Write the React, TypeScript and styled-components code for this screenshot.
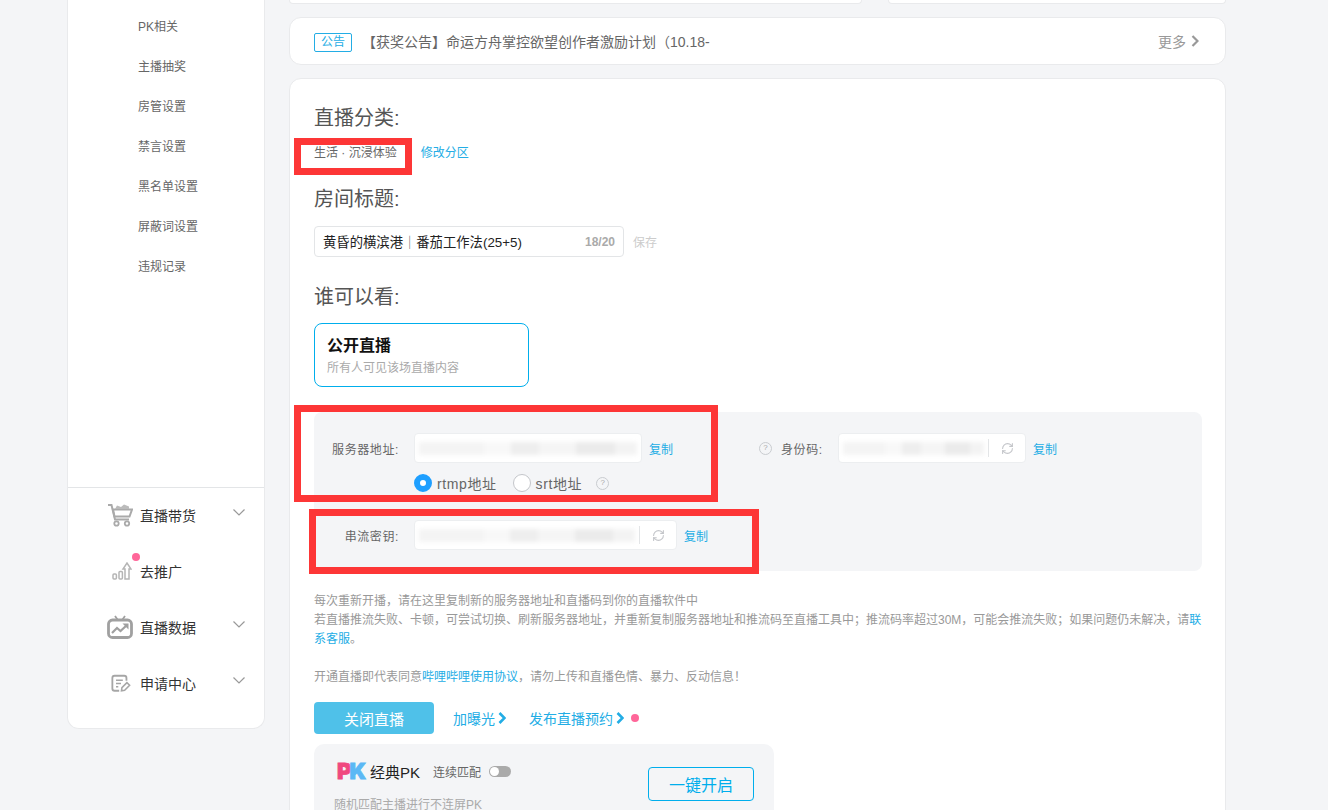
import React from "react";
import styled, { createGlobalStyle } from "styled-components";
import { RefreshCw } from "lucide-react";

const GlobalStyle = createGlobalStyle`
  html, body {
    margin: 0;
    padding: 0;
    height: 810px;
    overflow: hidden;
    background: #f4f5f7;
    font-family: "Liberation Sans", "Noto Sans CJK SC", sans-serif;
  }
  * { box-sizing: border-box; }
`;

const Page = styled.div`
  position: relative;
  display: flex;
  align-items: flex-start;
  gap: 24px;
  width: 1328px;
  height: 810px;
  padding-left: 67px;
  overflow: hidden;
`;

/* sidebar */
const Sidebar = styled.aside`
  width: 198px;
  height: 729px;
  display: flex;
  flex-direction: column;
  background: #fff;
  border: 1px solid #e9eaec;
  border-top: none;
  border-radius: 0 0 12px 12px;
`;
const SubMenu = styled.ul`
  list-style: none;
  margin: 0;
  padding: 7px 0 0 70px;
  height: 488px;
  border-bottom: 1px solid #e3e5e7;
`;
const SubItem = styled.li`
  height: 40px;
  line-height: 40px;
  font-size: 12px;
  color: #666;
`;
const MainMenu = styled.ul`
  list-style: none;
  margin: -1px 0 0;
  padding: 0;
`;
const MainItem = styled.li`
  position: relative;
  height: 56px;
  display: flex;
  align-items: center;
  font-size: 14px;
  color: #333;
`;
const IconSlot = styled.span<{ $pad: number }>`
  width: 72px;
  padding-left: ${(p) => p.$pad}px;
  display: flex;
  align-items: center;
  flex: none;
`;
const MenuChevron = styled.svg`
  position: absolute;
  left: 164px;
  top: 21px;
`;
const SideDot = styled.i`
  position: absolute;
  left: 64px;
  top: 10px;
  width: 8px;
  height: 8px;
  border-radius: 50%;
  background: #ff6699;
`;

/* main column */
const Main = styled.main`
  width: 937px;
  display: flex;
  flex-direction: column;
  gap: 13px;
`;
const TopRow = styled.div`
  height: 4px;
  display: flex;
  gap: 26px;
`;
const TopCard = styled.div<{ $width: number }>`
  width: ${(p) => p.$width}px;
  height: 4px;
  background: #fff;
  border: 1px solid #e9eaec;
  border-top: none;
  border-radius: 0 0 10px 10px;
`;
const NoticeCard = styled.section`
  height: 48px;
  display: flex;
  align-items: center;
  padding: 0 26px 0 24px;
  background: #fff;
  border: 1px solid #e9eaec;
  border-radius: 12px;
  font-size: 14px;
  color: #666;
`;
const NoticeTag = styled.span`
  width: 38px;
  height: 19px;
  margin-top: 2px;
  line-height: 17px;
  text-align: center;
  font-size: 12px;
  color: #23ade5;
  border: 1px solid #23ade5;
  border-radius: 2px;
  margin-right: 10px;
  flex: none;
`;
const NoticeText = styled.span`
  flex: 1;
  white-space: nowrap;
`;
const More = styled.span`
  display: flex;
  align-items: center;
  gap: 5px;
  color: #999;
`;
const ContentCard = styled.section`
  height: 760px;
  padding: 25px 24px 0 24px;
  background: #fff;
  border: 1px solid #e9eaec;
  border-radius: 12px;
`;
const Heading = styled.h3<{ $top?: number }>`
  margin: ${(p) => p.$top ?? 0}px 0 0;
  height: 28px;
  line-height: 28px;
  font-size: 20px;
  font-weight: 400;
  color: #555;
`;
const CategoryRow = styled.div`
  margin-top: 9px;
  height: 20px;
  display: flex;
  align-items: center;
  font-size: 12px;
  color: #666;
`;
const LinkText = styled.a<{ $left?: number }>`
  color: #23ade5;
  margin-left: ${(p) => p.$left ?? 0}px;
  cursor: pointer;
`;
const TitleRow = styled.div`
  margin-top: 13px;
  display: flex;
  align-items: center;
`;
const TitleBox = styled.div`
  width: 310px;
  height: 31px;
  display: flex;
  align-items: center;
  padding: 0 8px 0 8px;
  border: 1px solid #e3e5e7;
  border-radius: 4px;
  font-size: 13.33px;
  color: #222;
`;
const TitleValue = styled.span`
  flex: 1;
  white-space: nowrap;
`;
const TitleBar = styled.span`
  font-weight: 700;
  color: #777;
`;
const Counter = styled.span`
  font-size: 12px;
  font-weight: 700;
  color: #aaa;
`;
const SaveText = styled.span`
  margin-left: 9px;
  font-size: 12px;
  color: #ccc;
`;
const AudienceCard = styled.div`
  margin-top: 12px;
  width: 215px;
  height: 64px;
  padding: 11px 12px 0;
  border: 1px solid #00aeec;
  border-radius: 8px;
`;
const AudienceTitle = styled.div`
  height: 22px;
  line-height: 22px;
  font-size: 16px;
  font-weight: 700;
  color: #111;
`;
const AudienceSub = styled.div`
  margin-top: 3px;
  line-height: 16px;
  font-size: 12px;
  color: #aaa;
`;

/* stream panel */
const StreamPanel = styled.div`
  margin-top: 25px;
  width: 888px;
  height: 159px;
  padding-top: 21px;
  background: #f4f5f7;
  border-radius: 8px;
  font-size: 12px;
  color: #666;
`;
const FieldRow = styled.div<{ $top?: number }>`
  display: flex;
  align-items: center;
  margin-top: ${(p) => p.$top ?? 0}px;
`;
const FieldLabel = styled.label`
  width: 85px;
  margin-right: 15px;
  text-align: right;
  white-space: nowrap;
  letter-spacing: 0.6px;
`;
const FieldBox = styled.div<{ $width: number }>`
  position: relative;
  width: ${(p) => p.$width}px;
  height: 30px;
  display: flex;
  align-items: center;
  background: #fff;
  border: 1px solid #eceef0;
  border-radius: 4px;
  overflow: hidden;
`;
const Smear = styled.div<{ $flex: number }>`
  flex: ${(p) => p.$flex};
  height: 13px;
  margin: 0 4px;
  filter: blur(2px);
  background: linear-gradient(
    90deg,
    #f4f4f4 0 30%,
    #f8f8f8 30% 42%,
    #eeeeee 42% 55%,
    #f5f5f5 55% 72%,
    #ebebeb 72% 90%,
    #f3f3f3 90% 100%
  );
`;
const RefreshSlot = styled.div`
  width: 37px;
  height: 18px;
  flex: none;
  display: flex;
  align-items: center;
  justify-content: center;
  border-left: 1px solid #e3e5e7;
  color: #c4c6ca;
`;
const CopyLink = styled(LinkText)`
  margin-left: 7px;
`;
const HelpMark = styled.span<{ $left?: number; $right?: number }>`
  width: 13px;
  height: 13px;
  flex: none;
  margin-left: ${(p) => p.$left ?? 0}px;
  margin-right: ${(p) => p.$right ?? 0}px;
  line-height: 10px;
  text-align: center;
  font-size: 8px;
  color: #aaa;
  border: 1.5px solid #c9ccd0;
  border-radius: 50%;
`;
const IdLabel = styled.label`
  width: 41px;
  margin-right: 16px;
  white-space: nowrap;
  letter-spacing: 0.6px;
`;
const RadioRow = styled.div`
  margin: 11px 0 0 100px;
  height: 18px;
  display: flex;
  align-items: center;
  font-size: 14px;
  color: #666;
`;
const Radio = styled.span<{ $checked?: boolean }>`
  width: 18px;
  height: 18px;
  flex: none;
  margin-right: 5px;
  border-radius: 50%;
  background: #fff;
  border: ${(p) => (p.$checked ? "6px solid #1e9fff" : "1px solid #c4c6ca")};
`;
const RadioText = styled.span<{ $right: number }>`
  margin-right: ${(p) => p.$right}px;
  white-space: nowrap;
  letter-spacing: 0.6px;
`;

/* notes + actions */
const Notes = styled.div`
  margin-top: 21px;
  width: 888px;
  font-size: 12px;
  line-height: 19px;
  color: #999;
`;
const BlankLine = styled.div`
  height: 19px;
`;
const Actions = styled.div`
  margin-top: 15px;
  display: flex;
  align-items: center;
  font-size: 14px;
  color: #23ade5;
`;
const CloseButton = styled.button`
  width: 120px;
  height: 32px;
  padding: 0;
  margin-right: 19px;
  background: #4fc1e9;
  border: none;
  border-radius: 4px;
  font: inherit;
  font-size: 15px;
  color: #fff;
`;
const ActionLink = styled.a<{ $right: number }>`
  display: flex;
  align-items: center;
  gap: 3px;
  margin-right: ${(p) => p.$right}px;
`;
const ActionDot = styled.i`
  width: 8px;
  height: 8px;
  border-radius: 50%;
  background: #ff6699;
`;

/* pk panel */
const PkPanel = styled.div`
  margin-top: 10px;
  width: 460px;
  height: 90px;
  padding: 15px 20px 0 20px;
  background: #f4f5f7;
  border-radius: 10px 10px 0 0;
`;
const PkBody = styled.div`
  display: flex;
  justify-content: space-between;
`;
const PkHead = styled.div`
  height: 24px;
  display: flex;
  align-items: center;
  padding-left: 3px;
  color: #222;
  font-size: 15px;
`;
const PkLogo = styled.span`
  width: 33px;
  flex: none;
  font-family: Inter, "Liberation Sans", sans-serif;
  font-size: 22px;
  line-height: 24px;
  font-weight: 900;
  letter-spacing: -2px;
  white-space: nowrap;
  -webkit-text-stroke: 0.8px;
`;
const PkLetter = styled.span<{ $color: string }>`
  color: ${(p) => p.$color};
`;
const PkName = styled.span`
  margin-right: 13px;
  white-space: nowrap;
`;
const PkMode = styled.span`
  margin-right: 8px;
  font-size: 12px;
  color: #666;
`;
const Toggle = styled.span`
  width: 22px;
  height: 11px;
  padding: 1px;
  border-radius: 6px;
  background: #aaa;
  display: flex;
`;
const ToggleKnob = styled.i`
  width: 9px;
  height: 9px;
  border-radius: 50%;
  background: #fff;
`;
const PkSub = styled.div`
  margin-top: 14px;
  line-height: 16px;
  font-size: 12px;
  color: #aaa;
  white-space: nowrap;
`;
const PkButton = styled.button`
  width: 106px;
  height: 34px;
  margin-top: 8px;
  padding: 0;
  background: transparent;
  border: 1px solid #00aeec;
  border-radius: 4px;
  font: inherit;
  font-size: 16px;
  color: #00aeec;
`;

/* the red marks somebody drew on the screenshot */
const RedMark = styled.div<{ $x: number; $y: number; $w: number; $h: number }>`
  position: absolute;
  left: ${(p) => p.$x}px;
  top: ${(p) => p.$y}px;
  width: ${(p) => p.$w}px;
  height: ${(p) => p.$h}px;
  border: 7px solid #fd3636;
  pointer-events: none;
`;

const ArrowRight = ({ color, weight = 2.2 }: { color: string; weight?: number }) => (
  <svg width="8" height="12" viewBox="0 0 8 12" fill="none">
    <path d="M1.5 1 L6.5 6 L1.5 11" stroke={color} strokeWidth={weight} />
  </svg>
);

const ArrowDown = () => (
  <MenuChevron width="14" height="9" viewBox="0 0 14 9" fill="none">
    <path d="M1.5 1.5 L7 7 L12.5 1.5" stroke="#999" strokeWidth="1.2" />
  </MenuChevron>
);

const CartIcon = () => (
  <svg width="26" height="24" viewBox="0 0 26 24" fill="none" stroke="#aaa">
    <path d="M1 2 H4.5 L8 16.5 H22" strokeWidth="2" />
    <path d="M6 6.5 H25 L22.5 13.5 H7.5 Z" strokeWidth="2" />
    <path d="M8 6 L10 2.5 L14 4 L17 1.5 L22 3.5 V6 Z" fill="#bbb" stroke="none" />
    <circle cx="9.5" cy="20.5" r="2.2" strokeWidth="1.8" />
    <circle cx="20" cy="20.5" r="2.2" strokeWidth="1.8" />
  </svg>
);

const GrowthIcon = () => (
  <svg width="20" height="18" viewBox="0 0 20 18" fill="none" stroke="#b5b5b5" strokeWidth="1.5">
    <rect x="1" y="12" width="3.4" height="5" rx="1" />
    <rect x="7" y="9.5" width="3.4" height="7.5" rx="1" />
    <path d="M13 17 V7 H11 L15 1 L19 7 H17 V17 Z" />
  </svg>
);

const TvIcon = () => (
  <svg width="26" height="24" viewBox="0 0 26 24" fill="none" stroke="#a0a0a0" strokeWidth="2.8">
    <path d="M8 1 L10.5 4.5 M18 1 L15.5 4.5" strokeWidth="1.8" />
    <rect x="1.5" y="5" width="23" height="17.5" rx="4" />
    <path d="M5 18 L10 13 L13.5 16 L20 10" strokeWidth="2.2" />
    <path d="M15.5 8.5 H21.5 V14.5 Z" fill="#a0a0a0" stroke="none" />
  </svg>
);

const ApplyIcon = () => (
  <svg width="20" height="19" viewBox="0 0 22 20" fill="none" stroke="#a6a6a6" strokeWidth="2">
    <path d="M17 7 V4 Q17 1.5 14.5 1.5 H4 Q1.5 1.5 1.5 4 V15.5 Q1.5 18 4 18 H9" />
    <path d="M5.5 6.5 H13 M5.5 10 H11 M5.5 13.5 H8" strokeWidth="1.6" />
    <path d="M11.5 18 L12 14.5 L17.5 9 L20.5 12 L15 17.5 Z" strokeWidth="1.7" />
  </svg>
);

const subMenu = ["PK相关", "主播抽奖", "房管设置", "禁言设置", "黑名单设置", "屏蔽词设置", "违规记录"];

const App = () => (
  <>
    <GlobalStyle />
    <Page>
      <Sidebar>
        <SubMenu>
          {subMenu.map((name) => (
            <SubItem key={name}>{name}</SubItem>
          ))}
        </SubMenu>
        <MainMenu>
          <MainItem>
            <IconSlot $pad={39}><CartIcon /></IconSlot>直播带货<ArrowDown />
          </MainItem>
          <MainItem>
            <IconSlot $pad={44}><GrowthIcon /></IconSlot>去推广<SideDot />
          </MainItem>
          <MainItem>
            <IconSlot $pad={39}><TvIcon /></IconSlot>直播数据<ArrowDown />
          </MainItem>
          <MainItem>
            <IconSlot $pad={43}><ApplyIcon /></IconSlot>申请中心<ArrowDown />
          </MainItem>
        </MainMenu>
      </Sidebar>

      <Main>
        <TopRow>
          <TopCard $width={573} />
          <TopCard $width={338} />
        </TopRow>
        <NoticeCard>
          <NoticeTag>公告</NoticeTag>
          <NoticeText>【获奖公告】命运方舟掌控欲望创作者激励计划（10.18-</NoticeText>
          <More>更多<ArrowRight color="#999" /></More>
        </NoticeCard>
        <ContentCard>
          <Heading>直播分类:</Heading>
          <CategoryRow>
            生活 · 沉浸体验
            <LinkText $left={24}>修改分区</LinkText>
          </CategoryRow>
          <Heading $top={24}>房间标题:</Heading>
          <TitleRow>
            <TitleBox>
              <TitleValue>黄昏的横滨港<TitleBar>｜</TitleBar>番茄工作法(25+5)</TitleValue>
              <Counter>18/20</Counter>
            </TitleBox>
            <SaveText>保存</SaveText>
          </TitleRow>
          <Heading $top={26}>谁可以看:</Heading>
          <AudienceCard>
            <AudienceTitle>公开直播</AudienceTitle>
            <AudienceSub>所有人可见该场直播内容</AudienceSub>
          </AudienceCard>

          <StreamPanel>
            <FieldRow>
              <FieldLabel>服务器地址:</FieldLabel>
              <FieldBox $width={228}><Smear $flex={1} /></FieldBox>
              <CopyLink>复制</CopyLink>
              <HelpMark $left={86} $right={9}>?</HelpMark>
              <IdLabel>身份码:</IdLabel>
              <FieldBox $width={188}>
                <Smear $flex={1} />
                <RefreshSlot><RefreshCw size={13} /></RefreshSlot>
              </FieldBox>
              <CopyLink>复制</CopyLink>
            </FieldRow>
            <RadioRow>
              <Radio $checked />
              <RadioText $right={16}>rtmp地址</RadioText>
              <Radio />
              <RadioText $right={14}>srt地址</RadioText>
              <HelpMark>?</HelpMark>
            </RadioRow>
            <FieldRow $top={28}>
              <FieldLabel>串流密钥:</FieldLabel>
              <FieldBox $width={263}>
                <Smear $flex={1} />
                <RefreshSlot><RefreshCw size={13} /></RefreshSlot>
              </FieldBox>
              <CopyLink>复制</CopyLink>
            </FieldRow>
          </StreamPanel>

          <Notes>
            每次重新开播，请在这里复制新的服务器地址和直播码到你的直播软件中
            <br />
            若直播推流失败、卡顿，可尝试切换、刷新服务器地址，并重新复制服务器地址和推流码至直播工具中；推流码率超过30M，可能会推流失败；如果问题仍未解决，请<LinkText>联系客服</LinkText>。
            <BlankLine />
            开通直播即代表同意<LinkText>哔哩哔哩使用协议</LinkText>，请勿上传和直播色情、暴力、反动信息！
          </Notes>

          <Actions>
            <CloseButton>关闭直播</CloseButton>
            <ActionLink $right={23}>加曝光<ArrowRight color="#23ade5" weight={2.6} /></ActionLink>
            <ActionLink $right={7}>发布直播预约<ArrowRight color="#23ade5" weight={2.6} /></ActionLink>
            <ActionDot />
          </Actions>

          <PkPanel>
            <PkBody>
              <div>
                <PkHead>
                  <PkLogo>
                    <PkLetter $color="#f0487f">P</PkLetter>
                    <PkLetter $color="#5bb8f5">K</PkLetter>
                  </PkLogo>
                  <PkName>经典PK</PkName>
                  <PkMode>连续匹配</PkMode>
                  <Toggle><ToggleKnob /></Toggle>
                </PkHead>
                <PkSub>随机匹配主播进行不连屏PK</PkSub>
              </div>
              <PkButton>一键开启</PkButton>
            </PkBody>
          </PkPanel>
        </ContentCard>
      </Main>

      <RedMark $x={294} $y={138} $w={118} $h={37} />
      <RedMark $x={294} $y={405} $w={424} $h={97} />
      <RedMark $x={309} $y={509} $w={450} $h={65} />
    </Page>
  </>
);

export default App;
